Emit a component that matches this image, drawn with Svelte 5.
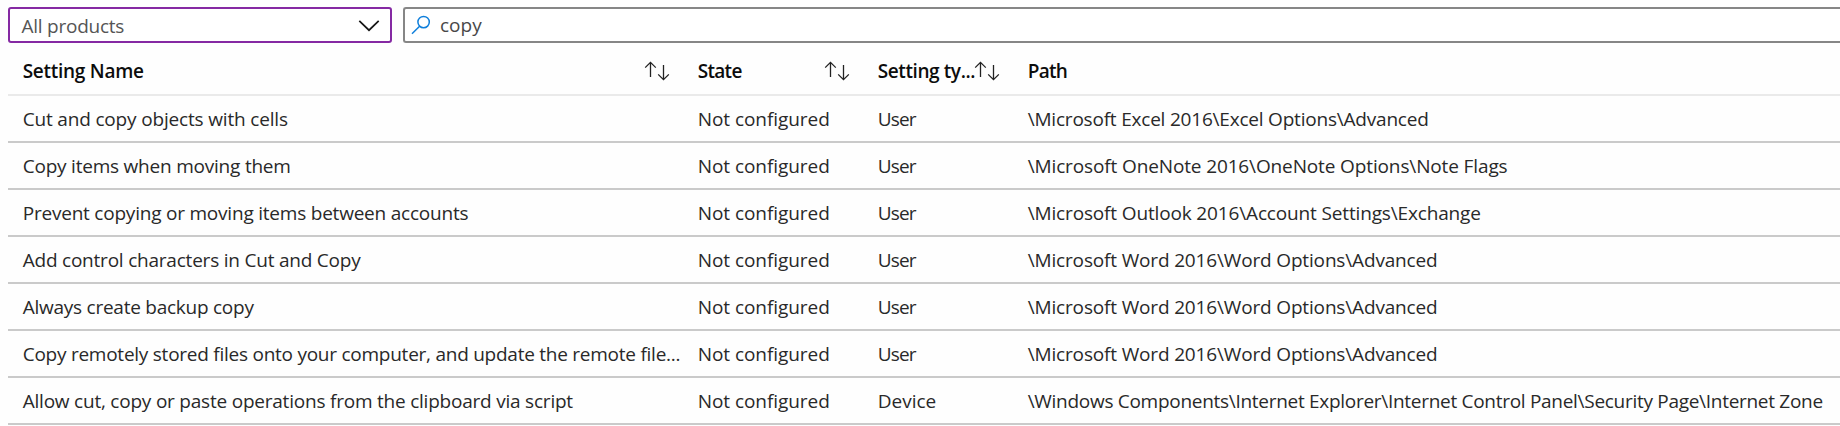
<script>
  const W = '\\Microsoft Word 2016\\Word Options\\Advanced';
  // Each cell pairs its text with the tracking (px) it is set in.
  const rows = [
    { name: ['Cut and copy objects with cells', -0.17], type: ['User', -0.8], path: ['\\Microsoft Excel 2016\\Excel Options\\Advanced', -0.205] },
    { name: ['Copy items when moving them', -0.215], type: ['User', -0.8], path: ['\\Microsoft OneNote 2016\\OneNote Options\\Note Flags', -0.13] },
    { name: ['Prevent copying or moving items between accounts', -0.215], type: ['User', -0.8], path: ['\\Microsoft Outlook 2016\\Account Settings\\Exchange', -0.15] },
    { name: ['Add control characters in Cut and Copy', -0.217], type: ['User', -0.8], path: [W, -0.16] },
    { name: ['Always create backup copy', -0.25], type: ['User', -0.8], path: [W, -0.16] },
    { name: ['Copy remotely stored files onto your computer, and update the remote file...', -0.25], type: ['User', -0.8], path: [W, -0.16] },
    { name: ['Allow cut, copy or paste operations from the clipboard via script', -0.218], type: ['Device', 0], path: ['\\Windows Components\\Internet Explorer\\Internet Control Panel\\Security Page\\Internet Zone', -0.29] }
  ];
</script>

{#snippet sort()}
  <svg class="sort" width="26" height="20" viewBox="0 0 26 20" aria-hidden="true">
    <path d="M6.5 16V1.5M1.2 6.6L6.5 1.3L11.8 6.6M19.5 4V18.5M14.2 13.4L19.5 18.7L24.8 13.4" />
  </svg>
{/snippet}

<div class="page">
  <div class="filters">
    <div class="select">
      <span class="products">All products</span>
      <svg width="22" height="13" viewBox="0 0 22 13" aria-hidden="true"><path d="M1.3 1.8L11 11.2L20.7 1.8" /></svg>
    </div>
    <div class="search">
      <svg width="20" height="20" viewBox="0 0 20 20" aria-hidden="true"><circle cx="12.6" cy="7.1" r="5.7" /><path d="M8.6 11.2L1 18.7" /></svg>
      <span>copy</span>
    </div>
  </div>

  <div class="row head">
    <div class="cell"><span class="h-name">Setting Name</span>{@render sort()}</div>
    <div class="cell"><span class="h-state">State</span>{@render sort()}</div>
    <div class="cell"><span class="h-type">Setting ty...</span>{@render sort()}</div>
    <div class="cell"><span class="h-path">Path</span></div>
  </div>
  {#each rows as r}
    <div class="row">
      <div class="cell"><span style="letter-spacing:{r.name[1]}px">{r.name[0]}</span></div>
      <div class="cell"><span class="state">Not configured</span></div>
      <div class="cell"><span style="letter-spacing:{r.type[1]}px">{r.type[0]}</span></div>
      <div class="cell"><span style="letter-spacing:{r.path[1]}px">{r.path[0]}</span></div>
    </div>
  {/each}
</div>

<style>
  :global(body) { background: #fefefe; overflow: hidden; }
  .page {
    box-sizing: border-box;
    height: 426px;
    padding: 7px 0 0 8px;
    overflow: hidden;
    font: 400 19px/26px "Open Sans", "Noto Sans", sans-serif;
    color: #292929;
    white-space: nowrap;
  }
  .filters { display: flex; gap: 11px; height: 36px; }
  .select, .search {
    box-sizing: border-box;
    display: flex;
    align-items: center;
    border: 2px solid #868686;
    border-radius: 3px;
    background: #fff;
    color: #555;
  }
  .select { width: 384px; justify-content: space-between; padding: 0 10px 0 11.5px; border-color: #8529a3; }
  .search { flex: 1; padding-left: 6px; gap: 9px; border-right: 0; border-radius: 3px 0 0 3px; }
  .search span { color: #484848; }
  .products { padding-top: 2px; letter-spacing: -0.247px; }
  svg { display: block; flex: none; fill: none; stroke-width: 1.4; }
  .select svg { stroke: #151515; stroke-width: 1.7; }
  .search svg { stroke: #0f7fdb; stroke-width: 1.5; }
  .row {
    box-sizing: border-box;
    display: grid;
    grid-template-columns: 675px 180px 150px 1fr;
    height: 47px;
    padding-left: 14.7px;
    border-bottom: 2px solid #cacaca;
  }
  .head { height: 53px; border-color: #eaeaea; color: #0c0c0c; font-weight: 600; }
  .cell { display: flex; align-items: center; min-width: 0; }
  .head .cell { justify-content: space-between; padding: 4px 27.7px 0 0; }
  .state { letter-spacing: -0.06px; }
  .sort { stroke: #222; stroke-width: 1.3; }
  .h-name { letter-spacing: -0.271px; }
  .h-state { letter-spacing: -0.7px; }
  .h-type { width: 96px; letter-spacing: -0.4px; }
  .h-path { letter-spacing: -0.7px; }
</style>
